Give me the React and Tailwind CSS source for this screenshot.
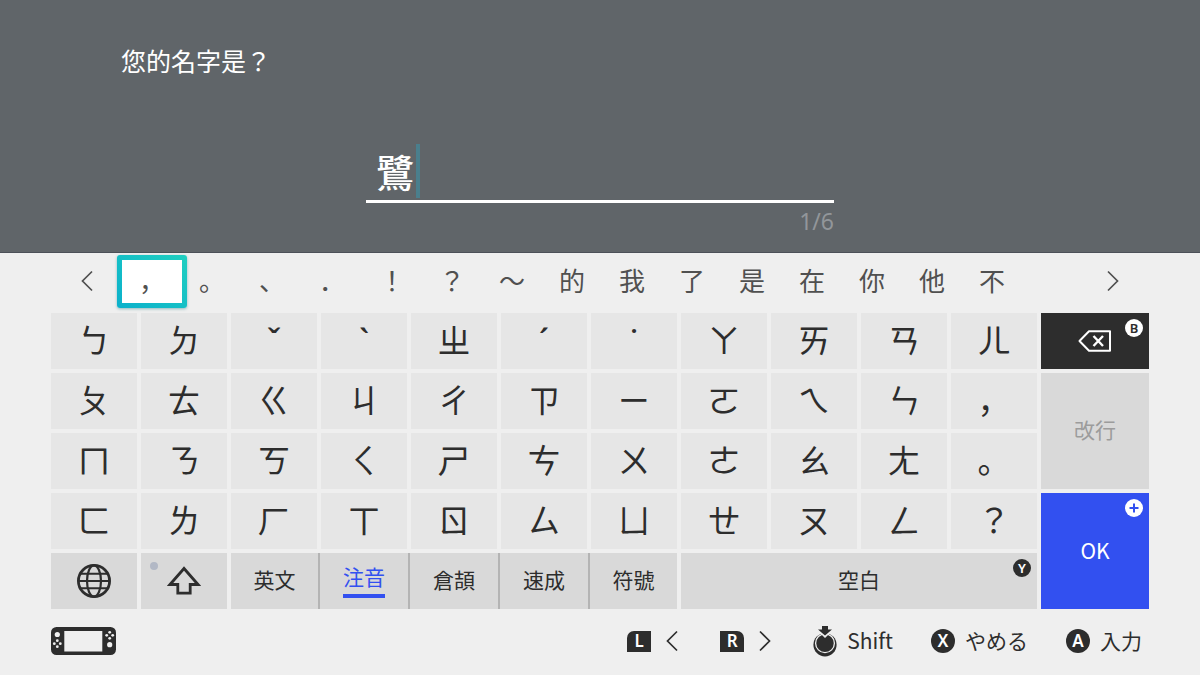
import React, { useState } from 'react';
import clsx from 'clsx';

const MAX_LENGTH = 6;

const CANDIDATES = ['，', '。', '、', '．', '！', '？', '～', '的', '我', '了', '是', '在', '你', '他', '不'];

const KEY_ROWS = [
  ['ㄅ', 'ㄉ', 'ˇ', 'ˋ', 'ㄓ', 'ˊ', '˙', 'ㄚ', 'ㄞ', 'ㄢ', 'ㄦ'],
  ['ㄆ', 'ㄊ', 'ㄍ', 'ㄐ', 'ㄔ', 'ㄗ', 'ㄧ', 'ㄛ', 'ㄟ', 'ㄣ', '，'],
  ['ㄇ', 'ㄋ', 'ㄎ', 'ㄑ', 'ㄕ', 'ㄘ', 'ㄨ', 'ㄜ', 'ㄠ', 'ㄤ', '。'],
  ['ㄈ', 'ㄌ', 'ㄏ', 'ㄒ', 'ㄖ', 'ㄙ', 'ㄩ', 'ㄝ', 'ㄡ', 'ㄥ', '？'],
];

const TONES = ['ˇ', 'ˋ', 'ˊ', '˙'];

const MODES = ['英文', '注音', '倉頡', '速成', '符號'];

const Chevron = ({ flip }) => (
  <svg width="12" height="22" viewBox="0 0 12 22" fill="none" stroke="currentColor" strokeWidth="1.7" className={clsx(flip && '-scale-x-100')}>
    <path d="M11 1.5L1.5 11L11 20.5" />
  </svg>
);

const GlobeIcon = () => (
  <svg width="36" height="36" viewBox="0 0 36 36" fill="none" stroke="currentColor" strokeWidth="2.2">
    <circle cx="18" cy="18" r="15.6" strokeWidth="2.8" />
    <ellipse cx="18" cy="18" rx="7" ry="15.6" />
    <path d="M2 18h32M4.5 10.8h27M4.5 25.2h27" strokeWidth="2" />
  </svg>
);

const ShiftIcon = () => (
  <svg width="34" height="30" viewBox="0 0 34 30" fill="none" stroke="currentColor" strokeWidth="2.8">
    <path d="M17 2.5L3 18.5H10.8V27.2H23.2V18.5H31L17 2.5Z" />
  </svg>
);

const BackspaceIcon = () => (
  <svg width="34" height="22" viewBox="0 0 34 22" fill="none" stroke="currentColor" strokeWidth="2" strokeLinejoin="round">
    <path d="M11 1.2H32V20.8H11L1.5 11Z" />
    <path d="M15.5 6L25 16M25 6L15.5 16" strokeWidth="2.4" />
  </svg>
);

const ConsoleIcon = () => (
  <svg width="65" height="28" viewBox="0 0 65 28">
    <rect width="65" height="28" rx="5.5" fill="#2d2d2d" />
    <rect x="13.3" y="4" width="38" height="20.5" fill="#efefef" />
    <g fill="#efefef">
      <circle cx="6.3" cy="7.5" r="2.6" />
      <circle cx="6.3" cy="13.7" r="1.4" />
      <circle cx="6.3" cy="19.7" r="1.4" />
      <circle cx="3.3" cy="16.7" r="1.4" />
      <circle cx="9.3" cy="16.7" r="1.4" />
      <circle cx="58.7" cy="17.7" r="2.6" />
      <circle cx="58.7" cy="5.3" r="1.4" />
      <circle cx="58.7" cy="11.3" r="1.4" />
      <circle cx="55.7" cy="8.3" r="1.4" />
      <circle cx="61.7" cy="8.3" r="1.4" />
    </g>
  </svg>
);

const StickIcon = () => (
  <svg width="24" height="32" viewBox="0 0 24 32">
    <circle cx="12" cy="19.8" r="11.6" fill="#2d2d2d" />
    <circle cx="12" cy="18.2" r="9.4" fill="none" stroke="#efefef" strokeWidth="1.3" />
    <path d="M7 -1H17V3H22L12 13L2 3H7Z" fill="#efefef" />
    <path d="M9 1H15V4.500H19L12 10.5L5 4.500H9Z" fill="#2d2d2d" />
  </svg>
);

// Round controller button; small ones sit in the corner of a key
const Badge = ({ children, corner, className }) => (
  <span
    className={clsx(
      'flex items-center justify-center rounded-full font-["Noto_Sans",sans-serif] font-semibold',
      corner ? 'absolute top-[6px] right-[6px] size-[18px] text-[13px] leading-[18px]' : 'size-6 text-[17px] leading-6',
      className
    )}
  >
    {children}
  </span>
);

const Candidate = ({ char, isActive, onSelect }) => (
  <button type="button" onClick={onSelect} className="relative h-[60px] flex-1 pb-[6px] text-[26px] leading-[54px] text-[#505050]">
    {isActive && (
      <span className="absolute -inset-x-[5px] top-[2px] bottom-[5px] rounded-[3px] bg-linear-to-tr from-[#0bb0cb] to-[#1fcfc0] p-[5px] shadow-[0_1px_3px_rgba(0,110,120,0.4)]">
        <span className="block h-full bg-white" />
      </span>
    )}
    <span className="relative">{char}</span>
  </button>
);

const Key = ({ char, onPress }) => (
  <button
    type="button"
    onClick={onPress}
    className={clsx(
      'h-14 bg-[#e6e6e6] text-[33px] text-[#2d2d2d]',
      TONES.includes(char) ? 'font-["Noto_Sans",sans-serif] leading-[56px] font-medium' : 'pb-1 leading-[52px]'
    )}
  >
    {char}
  </button>
);

const FooterHint = ({ icon, children }) => (
  <button type="button" className="flex items-center gap-[10px]">
    {icon}
    {children}
  </button>
);

export default function App() {
  const [name, setName] = useState('鷺');
  const [mode, setMode] = useState('注音');
  const [candidate, setCandidate] = useState(0);

  const append = (char) => setName((prev) => (prev + char).slice(0, MAX_LENGTH));

  return (
    <div lang="ja" className='flex min-h-screen flex-col bg-[#efefef] font-["Noto_Sans_CJK_JP",sans-serif] text-[#2d2d2d]'>
      {/* Prompt and text field */}
      <header className="border-b border-[#4c5058] bg-[#606569] pt-[42px] pb-[15px] text-white">
        <label htmlFor="name" className="block px-[121px] text-[25px] leading-9">
          您的名字是？
        </label>
        <div className="mx-auto mt-[66px] w-[39%]">
          <div className="relative border-b-[3px] border-white">
            <input
              id="name"
              value={name}
              maxLength={MAX_LENGTH}
              onChange={(e) => setName(e.target.value)}
              className="block h-14 w-full bg-transparent pb-1 pl-[10px] text-[38px] leading-[52px] font-medium caret-transparent outline-none"
            />
            <span className="absolute top-0 h-[54px] w-1 bg-[#4a7f8d]" style={{ left: 12 + name.length * 38 }} />
          </div>
          <div className='mt-1 mb-[2px] text-right font-["Noto_Sans",sans-serif] text-[23px] leading-7 text-[#92969a]'>
            {name.length}/{MAX_LENGTH}
          </div>
        </div>
      </header>

      <main className="px-[51px]">
        {/* Candidates */}
        <div className="flex items-center text-[#505050]">
          <button type="button" aria-label="Previous" className="flex h-[60px] w-[71px] items-center justify-center pb-1">
            <Chevron />
          </button>
          <div className="flex flex-1">
            {CANDIDATES.map((char, i) => (
              <Candidate key={char} char={char} isActive={i === candidate} onSelect={() => setCandidate(i)} />
            ))}
          </div>
          <button type="button" aria-label="Next" className="flex h-[60px] w-[127px] items-center justify-end pr-[30px] pb-1">
            <Chevron flip />
          </button>
        </div>

        {/* Keyboard */}
        <div className="grid grid-cols-[repeat(11,86fr)_108fr] gap-1">
          {KEY_ROWS.flat().map((char) => (
            <Key key={char} char={char} onPress={() => append(char)} />
          ))}

          <button type="button" aria-label="Language" className="flex h-14 items-center justify-center bg-[#d9d9d9]">
            <GlobeIcon />
          </button>
          <button type="button" aria-label="Shift" className="relative flex h-14 items-center justify-center bg-[#d9d9d9]">
            <span className="absolute top-[9px] left-[9px] size-2 rounded-full bg-[#b2b8c5]" />
            <ShiftIcon />
          </button>
          <div className="col-span-5 grid grid-cols-[87fr_90fr_90fr_90fr_89fr] bg-[#d9d9d9] text-[21px]">
            {MODES.map((label, i) => (
              <button
                key={label}
                type="button"
                onClick={() => setMode(label)}
                className={clsx(
                  'flex h-14 items-center justify-center',
                  i > 0 && 'border-l-2 border-[#b4b4b4]',
                  label === mode ? 'pb-[2px]' : 'pb-1'
                )}
              >
                <span className={clsx('leading-7', label === mode && 'border-b-4 border-[#3250f0] pb-1 text-[#3250f0]')}>
                  {label}
                </span>
              </button>
            ))}
          </div>
          <button type="button" onClick={() => append('　')} className="relative col-span-4 h-14 bg-[#d9d9d9] pb-[2px] text-[21px]">
            空白
            <Badge corner className="bg-[#2d2d2d] text-white">Y</Badge>
          </button>

          <button
            type="button"
            aria-label="Backspace"
            onClick={() => setName(name.slice(0, -1))}
            className="relative col-start-12 row-start-1 flex items-center justify-center bg-[#2d2d2d] text-white"
          >
            <BackspaceIcon />
            <Badge corner className="bg-white text-[#2d2d2d]">B</Badge>
          </button>
          <button type="button" disabled className="col-start-12 row-span-2 row-start-2 bg-[#d9d9d9] pb-[2px] text-[21px] text-[#9c9c9c]">
            改行
          </button>
          <button type="button" className="relative col-start-12 row-span-2 row-start-4 bg-[#3250f0] text-[21px] text-white">
            OK
            <Badge corner className="bg-white text-[#3250f0]">
              <svg width="10" height="10" viewBox="0 0 10 10" stroke="currentColor" strokeWidth="2">
                <path d="M5 0.500V9.500M0.500 5H9.500" />
              </svg>
            </Badge>
          </button>
        </div>
      </main>

      {/* Controller hints */}
      <footer className="flex h-16 items-center justify-between pr-[58px] pl-[51px] text-[21px]">
        <ConsoleIcon />
        <div className="flex items-center gap-[38px]">
          <div className="flex gap-[42px]">
            <button type="button" aria-label="L" className="flex items-center gap-[15px]">
              <span className='flex h-[21px] w-6 items-center justify-center rounded-tl-[7px] bg-[#2d2d2d] font-["Noto_Sans",sans-serif] text-[17px] leading-5 font-semibold text-white'>L</span>
              <Chevron />
            </button>
            <button type="button" aria-label="R" className="flex items-center gap-[15px]">
              <span className='flex h-[21px] w-6 items-center justify-center rounded-tr-[7px] bg-[#2d2d2d] font-["Noto_Sans",sans-serif] text-[17px] leading-5 font-semibold text-white'>R</span>
              <Chevron flip />
            </button>
            <FooterHint icon={<StickIcon />}>Shift</FooterHint>
          </div>
          <FooterHint icon={<Badge className="bg-[#2d2d2d] text-white">X</Badge>}>やめる</FooterHint>
          <FooterHint icon={<Badge className="bg-[#2d2d2d] text-white">A</Badge>}>入力</FooterHint>
        </div>
      </footer>
    </div>
  );
}
